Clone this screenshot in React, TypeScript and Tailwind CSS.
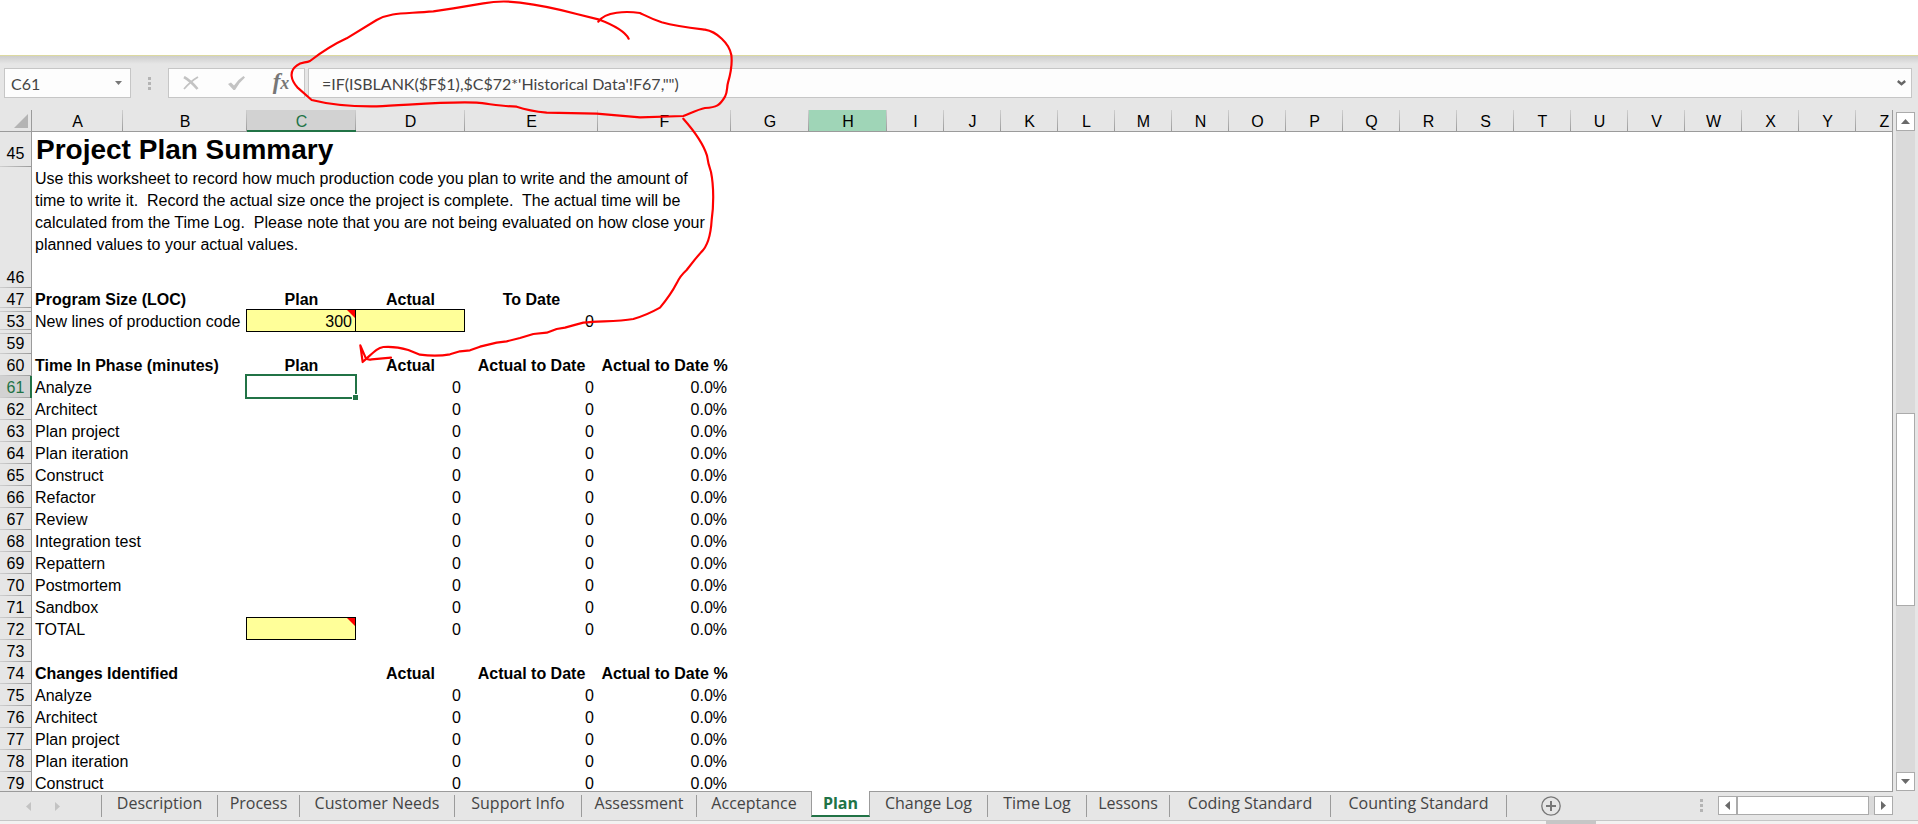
import React from "react";

type Align = "left" | "center" | "right";
interface Cell {
  text?: string;
  align?: Align;
  bold?: boolean;
  input?: boolean;
  note?: boolean;
  selected?: boolean;
}
interface Row {
  n: number;
  cells: Cell[];
}

const columns: { name: string; width: string }[] = [
  { name: "A", width: "w-[91px]" },
  { name: "B", width: "w-[124px]" },
  { name: "C", width: "w-[109px]" },
  { name: "D", width: "w-[109px]" },
  { name: "E", width: "w-[133px]" },
  { name: "F", width: "w-[133px]" },
  { name: "G", width: "w-[78px]" },
  { name: "H", width: "w-[78px]" },
  ..."IJKLMNOPQRSTUVWXYZ".split("").map((name) => ({ name, width: "w-[57px]" })),
];

const instructions = [
  "Use this worksheet to record how much production code you plan to write and the amount of",
  "time to write it.  Record the actual size once the project is complete.  The actual time will be",
  "calculated from the Time Log.  Please note that you are not being evaluated on how close your",
  "planned values to your actual values.",
].join("\n");

const head = (text: string): Cell => ({ text, align: "center", bold: true });
const num = (text: string): Cell => ({ text, align: "right" });
const phase = (n: number, name: string): Row => ({
  n,
  cells: [{ text: name }, {}, num("0"), num("0"), num("0.0%")],
});

const rows: Row[] = [
  { n: 47, cells: [{ text: "Program Size (LOC)", bold: true }, head("Plan"), head("Actual"), head("To Date"), {}] },
  {
    n: 53,
    cells: [
      { text: "New lines of production code" },
      { text: "300", align: "right", input: true, note: true },
      { input: true },
      num("0"),
      {},
    ],
  },
  { n: 59, cells: [{}, {}, {}, {}, {}] },
  {
    n: 60,
    cells: [
      { text: "Time In Phase (minutes)", bold: true },
      head("Plan"),
      head("Actual"),
      head("Actual to Date"),
      head("Actual to Date %"),
    ],
  },
  { n: 61, cells: [{ text: "Analyze" }, { selected: true }, num("0"), num("0"), num("0.0%")] },
  phase(62, "Architect"),
  phase(63, "Plan project"),
  phase(64, "Plan iteration"),
  phase(65, "Construct"),
  phase(66, "Refactor"),
  phase(67, "Review"),
  phase(68, "Integration test"),
  phase(69, "Repattern"),
  phase(70, "Postmortem"),
  phase(71, "Sandbox"),
  { n: 72, cells: [{ text: "TOTAL" }, { input: true, note: true }, num("0"), num("0"), num("0.0%")] },
  { n: 73, cells: [{}, {}, {}, {}, {}] },
  {
    n: 74,
    cells: [
      { text: "Changes Identified", bold: true },
      {},
      head("Actual"),
      head("Actual to Date"),
      head("Actual to Date %"),
    ],
  },
  phase(75, "Analyze"),
  phase(76, "Architect"),
  phase(77, "Plan project"),
  phase(78, "Plan iteration"),
  phase(79, "Construct"),
];

const tabsBefore = [
  { name: "Description", width: "w-[116px]" },
  { name: "Process", width: "w-[82px]" },
  { name: "Customer Needs", width: "w-[155px]" },
  { name: "Support Info", width: "w-[127px]" },
  { name: "Assessment", width: "w-[115px]" },
];
const tabsAfter = [
  { name: "Change Log", width: "w-[118px]" },
  { name: "Time Log", width: "w-[99px]" },
  { name: "Lessons", width: "w-[83px]" },
  { name: "Coding Standard", width: "w-[161px]" },
  { name: "Counting Standard", width: "w-[176px]" },
];

const alignClass: Record<Align, string> = {
  left: "text-left px-[3px]",
  center: "text-center px-0",
  right: "text-right px-[4px]",
};

function rowHeaderLines(n: number) {
  if (n === 47)
    return "bg-[linear-gradient(to_right,#cfcfcf,#9b9b9b)] bg-[length:100%_1px] bg-[position:0_19px] bg-no-repeat";
  if (n === 53)
    return "bg-[linear-gradient(to_right,#cfcfcf,#9b9b9b),linear-gradient(to_right,#cfcfcf,#9b9b9b)] bg-[length:100%_1px] bg-[position:0_1px,0_19px] bg-no-repeat";
  if (n === 59)
    return "bg-[linear-gradient(to_right,#cfcfcf,#9b9b9b),linear-gradient(to_right,#cfcfcf,#9b9b9b)] bg-[length:100%_1px] bg-[position:0_1px,0_21px] bg-no-repeat";
  return "bg-[linear-gradient(to_right,#cfcfcf,#9b9b9b)] bg-[length:100%_1px] bg-bottom bg-no-repeat";
}

function RowHeader({ n }: { n: number }) {
  const active = n === 61;
  return (
    <th
      scope="row"
      className={`px-0 pt-[2px] align-bottom text-center leading-[20px] font-normal border-r ${
        n === 45 ? "pb-[3px]" : "pb-0"
      } ${rowHeaderLines(n)} ${
        active
          ? "bg-[#d2d2d2] text-[#217346] border-[#217346] shadow-[inset_-1px_0_0_#217346]"
          : "bg-[#e6e6e6] border-[#9b9b9b]"
      }`}
    >
      {n}
    </th>
  );
}

function DataCell({ cell, span }: { cell: Cell; span: number }) {
  return (
    <td
      colSpan={span}
      className={`relative h-[22px] pt-[2px] pb-0 leading-[20px] whitespace-nowrap ${
        alignClass[cell.align ?? "left"]
      } ${cell.bold ? "font-bold" : ""}`}
    >
      {cell.input && (
        <span className="absolute -left-px -top-px right-0 bottom-0 border border-black bg-[#ffff99]">
          {cell.note && (
            <svg className="absolute right-0 top-0 size-[8px]" viewBox="0 0 8 8" aria-hidden="true">
              <path d="M0 0H8V8Z" fill="#ff0000" />
            </svg>
          )}
        </span>
      )}
      {cell.selected && (
        <span className="absolute -left-[2px] -top-[2px] -right-px -bottom-px border-2 border-[#217346]">
          <span className="absolute -right-[3px] -bottom-[3px] size-[6px] border-l border-t border-white bg-[#217346]" />
        </span>
      )}
      <span className="relative">{cell.text}</span>
    </td>
  );
}

function Sheet() {
  return (
    <div className="min-w-0 flex-1 overflow-hidden border-r border-[#9b9b9b]">
      <table className="w-max table-fixed border-separate border-spacing-0 bg-white font-['Liberation_Sans',Arial,sans-serif] text-[16px] leading-[22px] text-black">
        <colgroup>
          <col className="w-[32px]" />
          {columns.map((c) => (
            <col key={c.name} className={c.width} />
          ))}
        </colgroup>
        <thead>
          <tr className="h-[22px]">
            <td className="border-r border-b border-[#9b9b9b] bg-[#e6e6e6] p-0">
              <svg className="ml-auto mr-[3px] size-[14px]" viewBox="0 0 14 14" aria-hidden="true">
                <path d="M14 0V14H0Z" fill="#b4b4b4" />
              </svg>
            </td>
            {columns.map((c) => (
              <th
                key={c.name}
                scope="col"
                className={`p-0 font-normal bg-[linear-gradient(to_bottom,#cfcfcf,#9b9b9b)] bg-[length:1px_100%] bg-right bg-no-repeat border-b ${
                  c.name === "C"
                    ? "bg-[#d2d2d2] text-[#217346] border-[#217346] shadow-[inset_0_-1px_0_#217346]"
                    : c.name === "H"
                      ? "bg-[#9fd5b7] border-[#9b9b9b]"
                      : "bg-[#e6e6e6] border-[#9b9b9b]"
                }`}
              >
                <span className="block h-[21px] leading-[24px]">{c.name}</span>
              </th>
            ))}
          </tr>
        </thead>
        <tbody>
          <tr className="h-[35px]">
            <RowHeader n={45} />
            <td colSpan={26} className="px-[4px] py-0 align-top text-[28px] leading-[35px] font-bold">
              Project Plan Summary
            </td>
          </tr>
          <tr className="h-[121px]">
            <RowHeader n={46} />
            <td colSpan={6} className="px-[3px] pt-px pb-0 align-top whitespace-pre">
              {instructions}
            </td>
            <td colSpan={20} />
          </tr>
          {rows.map((row) => (
            <tr key={row.n} className="h-[22px]">
              <RowHeader n={row.n} />
              {row.cells.map((cell, i) => (
                <DataCell key={i} cell={cell} span={i === 0 ? 2 : 1} />
              ))}
              <td colSpan={20} />
            </tr>
          ))}
        </tbody>
      </table>
    </div>
  );
}

function Arrow({ dir }: { dir: "up" | "down" | "left" | "right" }) {
  const d = {
    up: "M0 7L4.5 2L9 7Z",
    down: "M0 2L4.5 7L9 2Z",
    left: "M7 0L2 4.5L7 9Z",
    right: "M2 0L7 4.5L2 9Z",
  }[dir];
  return (
    <svg className="size-[9px]" viewBox="0 0 9 9" aria-hidden="true">
      <path d={d} fill="currentColor" />
    </svg>
  );
}

const scrollButton =
  "flex size-[19px] shrink-0 items-center justify-center border border-[#ababab] bg-white text-[#6a6a6a]";

function VerticalScroll() {
  return (
    <div className="mr-[3px] ml-[3px] flex w-[19px] shrink-0 flex-col bg-[#dadada] before:h-[2px] before:bg-[#e6e6e6]">
      <button className={scrollButton} aria-label="Scroll up">
        <Arrow dir="up" />
      </button>
      <div className="flex min-h-0 flex-1 flex-col">
        <div className="flex-[283]" />
        <div className="flex-[192] border border-[#ababab] bg-white" />
        <div className="flex-[167]" />
      </div>
      <button className={scrollButton} aria-label="Scroll down">
        <Arrow dir="down" />
      </button>
    </div>
  );
}

function Dots() {
  return (
    <span className="flex flex-col gap-[2px]" aria-hidden="true">
      <span className="size-[3px] bg-[#b4b4b4]" />
      <span className="size-[3px] bg-[#b4b4b4]" />
      <span className="size-[3px] bg-[#b4b4b4]" />
    </span>
  );
}

function FormulaBar() {
  return (
    <div className="flex h-[54px] items-start bg-[#e6e6e6] bg-[linear-gradient(to_bottom,#cdcdcd,#e6e6e6_8px)] pt-[12px] pr-[6px] pl-[4px] font-[Lato,Carlito,sans-serif] text-[16px] text-[#444]">
      <div className="flex h-[30px] w-[127px] shrink-0 items-center border border-[#c6c6c6] bg-[#fdfdfd]">
        <input
          aria-label="Name box"
          defaultValue="C61"
          className="h-full w-full min-w-0 bg-transparent pl-[6px] outline-none"
        />
        <button aria-label="Show names" className="flex h-full w-[24px] shrink-0 items-center justify-center">
          <svg className="h-[4px] w-[7px]" viewBox="0 0 7 4" aria-hidden="true">
            <path d="M0 0H7L3.5 4Z" fill="#777" />
          </svg>
        </button>
      </div>
      <div className="flex h-[30px] w-[37px] shrink-0 items-center justify-center">
        <Dots />
      </div>
      <div className="flex h-[30px] w-[137px] shrink-0 items-center border border-[#c6c6c6] bg-[#fdfdfd]">
        <button aria-label="Cancel" className="flex h-full w-[44px] items-center justify-center">
          <svg className="h-[14px] w-[16px]" viewBox="0 0 16 14" fill="none" stroke="#c3c3c3">
            <path d="M1 1Q8 5 14.5 13" strokeWidth="2.6" />
            <path d="M15 1Q8 5 1 13" strokeWidth="1.8" />
          </svg>
        </button>
        <button aria-label="Enter" className="flex h-full w-[46px] items-center justify-center">
          <svg className="h-[14px] w-[17px]" viewBox="0 0 17 14" aria-hidden="true">
            <path d="M0 8L3 6.5L6 9.5Q10 3.500 15.500 0L17 1.500Q11 6.500 7 14H5.500Z" fill="#c3c3c3" />
          </svg>
        </button>
        <button
          aria-label="Insert function"
          className="h-full w-[44px] pb-[2px] font-['Liberation_Serif',serif] text-[23px] leading-[26px] font-bold text-[#777] italic"
        >
          f<span className="text-[18px]">x</span>
        </button>
      </div>
      <div className="ml-[3px] flex h-[30px] min-w-0 flex-1 items-center border border-[#c6c6c6] bg-[#fdfdfd]">
        <input
          aria-label="Formula"
          defaultValue={`=IF(ISBLANK($F$1),$C$72*'Historical Data'!F67,"")`}
          className="h-full min-w-0 flex-1 bg-transparent pl-[13px] outline-none"
        />
        <button aria-label="Expand formula bar" className="flex h-full w-[20px] items-center justify-center">
          <svg className="h-[6px] w-[9px]" viewBox="0 0 9 6" fill="none" stroke="#666" strokeWidth="2.4">
            <path d="M0.8 1L4.5 4.2L8.2 1" />
          </svg>
        </button>
      </div>
    </div>
  );
}

function Tab({ name, width, last }: { name: string; width: string; last?: boolean }) {
  return (
    <button
      role="tab"
      aria-selected={false}
      className={`${width} mt-[3px] flex h-[22px] shrink-0 items-start justify-center whitespace-nowrap leading-[16px] ${
        last ? "" : "border-r border-[#9b9b9b]"
      }`}
    >
      {name}
    </button>
  );
}

function TabBar() {
  return (
    <div className="flex h-[29px] shrink-0 bg-[#e6e6e6] font-['Open_Sans','Segoe_UI',sans-serif] text-[16px] text-[#444]">
      <div className="flex min-w-0 flex-1 border-t border-[#9b9b9b]">
        <div className="mt-[3px] flex h-[22px] w-[102px] shrink-0 items-center gap-[20px] border-r border-[#9b9b9b] pl-[24px] text-[#c3c3c3]">
          <button aria-label="Previous sheets">
            <Arrow dir="left" />
          </button>
          <button aria-label="Next sheets">
            <Arrow dir="right" />
          </button>
        </div>
        <div role="tablist" className="flex shrink-0">
          {tabsBefore.map((t) => (
            <Tab key={t.name} {...t} />
          ))}
          <Tab name="Acceptance" width="w-[114px]" last />
          <button
            role="tab"
            aria-selected
            className="-mt-px flex h-[26px] w-[59px] items-start justify-center border-x border-b-2 border-x-[#9b9b9b] border-b-[#217346] bg-white pt-[4px] leading-[16px] font-bold text-[#217346]"
          >
            Plan
          </button>
          {tabsAfter.map((t) => (
            <Tab key={t.name} {...t} />
          ))}
        </div>
        <button aria-label="New sheet" className="mt-[4px] ml-[34px] size-[20px] shrink-0 text-[#777]">
          <svg viewBox="0 0 20 20" fill="none" stroke="currentColor" aria-hidden="true">
            <circle cx="10" cy="10" r="9.2" strokeWidth="1.3" />
            <path d="M10 5V15M5 10H15" strokeWidth="2" />
          </svg>
        </button>
        <div className="mt-[7px] mr-[15px] ml-auto">
          <Dots />
        </div>
        <div className="mt-[4px] flex h-[19px] w-[175px] shrink-0 bg-[#dadada]">
          <button className={scrollButton} aria-label="Scroll left">
            <Arrow dir="left" />
          </button>
          <div className="w-[132px] border border-[#ababab] bg-white" />
          <button className={`${scrollButton} ml-auto`} aria-label="Scroll right">
            <Arrow dir="right" />
          </button>
        </div>
      </div>
      <div className="w-[25px] shrink-0" />
    </div>
  );
}

function InkNotes() {
  return (
    <svg
      className="pointer-events-none absolute top-0 left-0 h-[380px] w-[740px]"
      viewBox="0 0 740 380"
      fill="none"
      stroke="#ff0000"
      strokeWidth="6.5"
      strokeLinecap="round"
      strokeLinejoin="round"
      aria-hidden="true"
    >
      <g transform="scale(0.33333)">
        <path d="M1886 116C1875 95 1840 75 1795 58L1730 42Q1640 18 1560 8Q1505 0 1450 10L1360 25L1300 34C1210 42 1175 36 1130 60L1040 115C990 138 960 160 930 183C915 190 905 184 890 197C866 215 873 240 892 262L935 300C990 314 1060 320 1130 319C1220 316 1330 304 1430 308C1470 312 1510 319 1550 320C1580 330 1600 334 1640 338L1790 341L1920 352L2050 348C2075 338 2095 328 2115 324C2150 322 2160 316 2175 290C2183 275 2180 262 2184 248C2192 220 2198 195 2194 165C2188 130 2150 95 2115 89C2070 84 2030 80 1985 67C1955 57 1935 46 1920 39C1880 33 1815 34 1795 65" />
        <path d="M2050 356C2080 390 2110 430 2121 467Q2124 490 2133 516C2142 560 2141 620 2135 660C2132 710 2122 740 2103 757L2085 778L2060 810Q2040 828 2030 850C2012 885 1995 905 1980 923C1950 940 1925 950 1900 957C1850 965 1800 963 1750 968Q1720 976 1695 983L1670 987L1640 998L1600 1002L1560 1014L1520 1024L1490 1028L1440 1040L1410 1051L1380 1054L1350 1063Q1310 1070 1260 1064L1225 1050Q1185 1038 1150 1041C1130 1044 1120 1058 1088 1086L1081 1036L1098 1076Q1105 1080 1115 1078L1173 1073" />
      </g>
    </svg>
  );
}

export default function App() {
  return (
    <div className="relative flex h-screen flex-col overflow-hidden bg-[#e6e6e6]">
      <div className="h-[56px] shrink-0 border-b border-[#dcd9a0] bg-white" />
      <FormulaBar />
      <div className="flex min-h-0 flex-1">
        <Sheet />
        <VerticalScroll />
      </div>
      <TabBar />
      <div className="h-[4px] shrink-0 border-t border-[#c6c6c6] bg-[#f3f2f1] pl-[1546px]">
        <div className="h-full w-[50px] bg-[#c6c6c6]" />
      </div>
      <InkNotes />
    </div>
  );
}
